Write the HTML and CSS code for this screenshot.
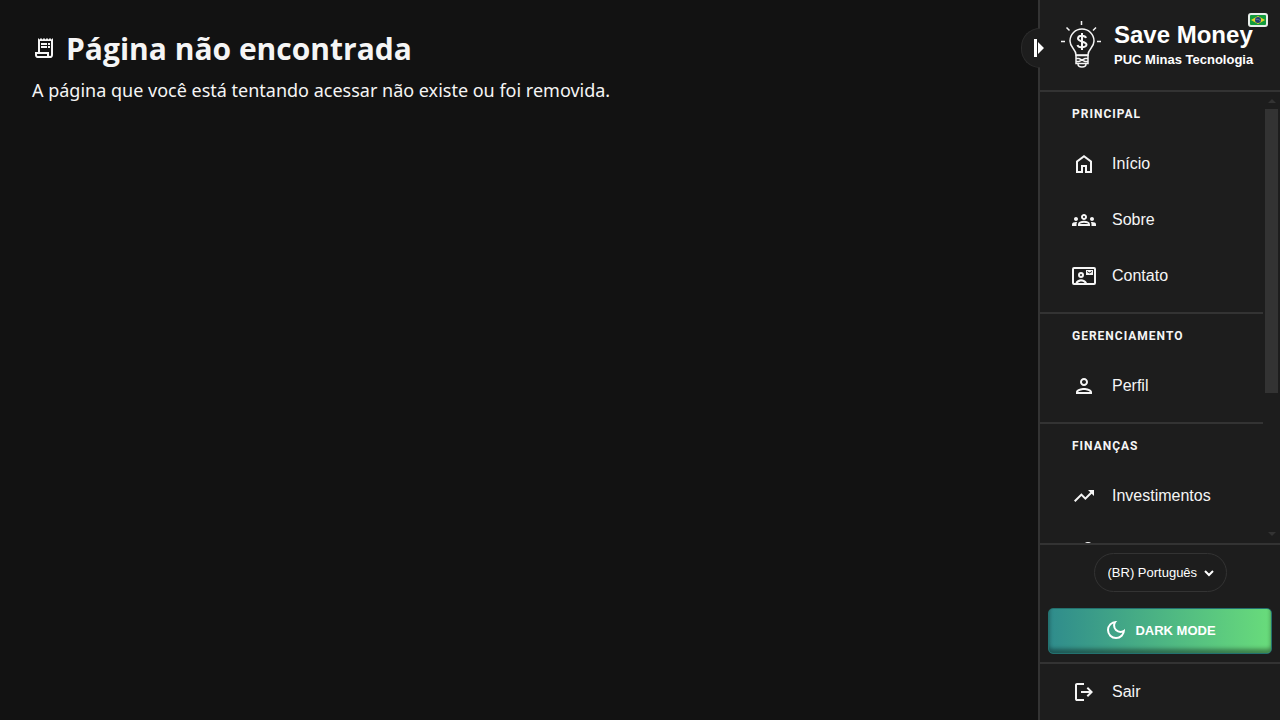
FILE: index.html
```html
<!DOCTYPE html>
<html lang="pt-BR">
<head>
<meta charset="utf-8">
<meta name="viewport" content="width=device-width, initial-scale=1">
<title>Save Money</title>
<link rel="stylesheet" href="styles.css">
</head>
<body>
<div class="layout">
  <main class="content">
    <div class="page-title">
      <svg class="icon" viewBox="0 0 24 24" aria-hidden="true"><path fill-rule="evenodd" d="M6 22q-1.250 0-2.125-.875T3 19v-3h3V2l1.500 1.500L9 2l1.500 1.500L12 2l1.500 1.500L15 2l1.500 1.500L18 2l1.500 1.500L21 2v17q0 1.250-.875 2.125T18 22zM18 20q.425 0 .713-.288T19 19V5H8v11h9v3q0 .425.288.713T18 20zM5 18v1q0 .425.288.713T6 20h9v-2zM9 7h6v2H9zM9 10h6v2H9zM16 7h2v2h-2zM16 10h2v2h-2z"/></svg>
      <h1>Página não encontrada</h1>
    </div>
    <p class="lead">A página que você está tentando acessar não existe ou foi removida.</p>
  </main>

  <aside class="sidebar">
    <button class="collapse" type="button" aria-expanded="true">
      <svg viewBox="0 0 12 20" aria-hidden="true"><path d="M1 1h3v18H1zM5 4l6 6-6 6z"/></svg>
    </button>

    <header class="brand">
      <svg class="logo" viewBox="0 0 40 48" aria-hidden="true">
        <path d="M20.500 0v4M5.500 6.500l3 3M35 6.500l-3 3M0 20.500h4M36 20.500h4"/>
        <path d="M15 34c0-6-6-7-6-14a12 12 0 0 1 24 0c0 7-6 8-6 14z"/>
        <path d="M15 34.500h12v8H15zM15 37.500h3l6 3h3M15 40.500h3l6-3h3M17 43c0 4 8 4 8 0"/>
        <path class="logo-dollar" d="M25 17c-1-3-8-3-8 .5s8.500 3 8.500 6-8 4-9 .5M21 12v17"/>
      </svg>
      <div class="brand-text">
        <span class="brand-name">Save Money</span>
        <span class="brand-sub">PUC Minas Tecnologia</span>
      </div>
      <svg class="flag" viewBox="0 0 20 14" aria-hidden="true">
        <rect x="1" y="1" width="18" height="12" rx="2" fill="#129b3c" stroke="#e8eeea" stroke-width="2"/>
        <path d="M10 3l7 4-7 4-7-4z" fill="#e9d32a"/><circle cx="10" cy="7" r="3" fill="#203f79"/><path d="M7.500 6.300q3-.5 5 1.500" fill="none" stroke="#5f7f99"/>
      </svg>
    </header>

    <div class="nav-wrap">
      <nav class="nav">
        <section class="group">
          <h2>PRINCIPAL</h2>
          <a class="item" href="#"><svg class="icon" viewBox="0 0 24 24" aria-hidden="true"><path d="M6 19h3v-6h6v6h3v-9l-6-4.500L6 10zM4 21V9l8-6 8 6v12h-7v-6h-2v6z"/></svg>Início</a>
          <a class="item" href="#"><svg class="icon" viewBox="0 0 24 24" aria-hidden="true"><path d="M4 13c1.100 0 2-.9 2-2s-.9-2-2-2-2 .9-2 2 .9 2 2 2zm1.130 1.100C4.760 14.040 4.390 14 4 14c-.99 0-1.930.21-2.780.58A2.010 2.010 0 0 0 0 16.430V18h4.500v-1.610c0-.83.23-1.610.63-2.290zM20 13c1.100 0 2-.9 2-2s-.9-2-2-2-2 .9-2 2 .9 2 2 2zm4 3.430c0-.81-.48-1.530-1.220-1.850A6.950 6.950 0 0 0 20 14c-.39 0-.76.04-1.130.1.4.68.63 1.460.63 2.290V18H24zM16.240 13.650c-1.170-.52-2.610-.9-4.240-.9s-3.070.39-4.240.9A2.988 2.988 0 0 0 6 16.390V18h12v-1.610c0-1.180-.68-2.260-1.760-2.740zM8.070 16c.09-.23.13-.39.91-.69.97-.38 1.990-.56 3.020-.56s2.050.18 3.020.56c.77.3.81.46.91.69zM12 8c.55 0 1 .45 1 1s-.45 1-1 1-1-.45-1-1 .45-1 1-1m0-2c-1.660 0-3 1.340-3 3s1.340 3 3 3 3-1.340 3-3-1.340-3-3-3z"/></svg>Sobre</a>
          <a class="item" href="#"><svg class="icon" viewBox="0 0 24 24" aria-hidden="true"><path fill-rule="evenodd" d="M2 3h20q2 0 2 2v14q0 2-2 2H2q-2 0-2-2V5q0-2 2-2zM2 5v14h1.500C5 14 13 14 15 19h7V5zM6 19h6.500C11 17 7.500 17 6 19zM9 8a3 3 0 1 1 0 6 3 3 0 0 1 0-6zM9 10a1 1 0 1 0 0 2 1 1 0 0 0 0-2zM14 6h7v5h-7zM15 7v1l2.500 1.500L20 8V7l-2.500 1.500z"/></svg>Contato</a>
        </section>
        <section class="group">
          <h2>GERENCIAMENTO</h2>
          <a class="item" href="#"><svg class="icon" viewBox="0 0 24 24" aria-hidden="true"><path d="M12 6c1.100 0 2 .9 2 2s-.9 2-2 2-2-.9-2-2 .9-2 2-2m0 10c2.700 0 5.800 1.290 6 2H6c.23-.72 3.310-2 6-2m0-12C9.790 4 8 5.790 8 8s1.790 4 4 4 4-1.790 4-4-1.790-4-4-4zm0 10c-2.670 0-8 1.340-8 4v2h16v-2c0-2.660-5.330-4-8-4z"/></svg>Perfil</a>
        </section>
        <section class="group">
          <h2>FINANÇAS</h2>
          <a class="item" href="#"><svg class="icon" viewBox="0 0 24 24" aria-hidden="true"><path d="M16 6l2.290 2.290-4.880 4.880-4-4L2 16.590 3.410 18l6-6 4 4 6.300-6.290L22 12V6z"/></svg>Investimentos</a>
          <a class="item" href="#"><svg class="icon" viewBox="0 0 24 24" aria-hidden="true"><path fill-rule="evenodd" d="M16 2a4 4 0 0 1 0 8 4 4 0 0 1 0-8zM16 4a2 2 0 1 0 0 4 2 2 0 0 0 0-4zM2 12h6l8 3v2h5v3l-8 2-6-2H2z"/></svg></a>
        </section>
      </nav>
      <div class="scrollbar" aria-hidden="true">
        <span class="arrow arrow-up"></span>
        <span class="track"><span class="thumb"></span></span>
        <span class="arrow arrow-down"></span>
      </div>
    </div>

    <div class="settings">
      <div class="language">
        <select aria-label="Idioma"><option>(BR) Português</option></select>
        <svg viewBox="0 0 10 8" aria-hidden="true"><path d="M1 2l4 4 4-4"/></svg>
      </div>
      <button class="theme" type="button"><svg class="icon" viewBox="0 0 24 24" aria-hidden="true"><path d="M12 21q-3.750 0-6.375-2.625T3 12q0-3.750 2.625-6.375T12 3q.35 0 .688.025t.662.075q-1.025.725-1.638 1.888T11.100 7.500q0 2.250 1.575 3.825T16.500 12.900q1.375 0 2.525-.613T20.900 10.650q.05.325.075.663T21 12q0 3.750-2.625 6.375T12 21zm0-2q2.200 0 3.950-1.213t2.550-3.162q-.5.125-1 .2t-1 .075q-3.075 0-5.238-2.163T9.100 7.500q0-.5.075-1t.2-1q-1.950.8-3.163 2.550T5 12q0 2.900 2.050 4.950T12 19z"/></svg>DARK MODE</button>
    </div>

    <a class="item" href="#"><svg class="icon" viewBox="0 0 24 24" aria-hidden="true"><path d="M5 21q-.825 0-1.412-.587T3 19V5q0-.825.587-1.412T5 3h7v2H5v14h7v2zM16 17l-1.375-1.450L17.175 13H9v-2h8.175l-2.550-2.550L16 7l5 5z"/></svg>Sair</a>
  </aside>
</div>
</body>
</html>
```
FILE: styles.css
```css
* {
  box-sizing: border-box;
}

body {
  margin: 0;
  background: #121212;
  color: #f5f5f5;
  font-family: "Liberation Sans", Arial, sans-serif;
  font-size: 16px;
}

.layout {
  display: flex;
  height: 100vh;
}

.content {
  flex: 1;
  padding: 27px 32px;
  font-family: "Noto Sans", "Open Sans", sans-serif;
}

.page-title {
  display: flex;
  align-items: center;
  gap: 10px;
}

h1 {
  margin: 0;
  font-family: "Open Sans", "Noto Sans", sans-serif;
  font-size: 30px;
  line-height: 44px;
}

.page-title .icon {
  margin-bottom: 2px;
}

.lead {
  margin: 5px 0 0;
  font-size: 18px;
  line-height: 28px;
}

.icon {
  flex: none;
  width: 24px;
  height: 24px;
  fill: currentColor;
}

.sidebar {
  position: relative;
  display: flex;
  flex-direction: column;
  flex: none;
  width: 242px;
  background: #1d1d1d;
  border-left: 2px solid #333;
}

.collapse {
  position: absolute;
  top: 28px;
  left: -19px;
  width: 19px;
  height: 40px;
  padding: 0;
  background: #1d1d1d;
  border: 1px solid #2c2c2c;
  border-right: 0;
  border-radius: 20px 0 0 20px;
}

.collapse svg {
  position: absolute;
  top: 9px;
  left: 11px;
  width: 12px;
  height: 20px;
  fill: #fff;
}

.brand {
  position: relative;
  display: flex;
  align-items: center;
  gap: 13px;
  height: 92px;
  padding-left: 21px;
  border-bottom: 2px solid #333;
}

.logo {
  width: 40px;
  height: 48px;
  fill: none;
  stroke: #f5f5f5;
  stroke-width: 1.5;
}

.logo-dollar {
  stroke-width: 2;
}

.brand-text {
  display: flex;
  flex-direction: column;
  color: #fff;
  font-weight: bold;
  white-space: nowrap;
}

.brand-name {
  font-size: 24px;
  line-height: 30px;
}

.brand-sub {
  font-size: 13px;
  line-height: 20px;
}

.flag {
  position: absolute;
  top: 13px;
  right: 12px;
  width: 20px;
  height: 14px;
}

.nav-wrap {
  display: flex;
  flex: 1;
  min-height: 0;
}

.nav {
  flex: 1;
  overflow: hidden;
}

.group {
  padding: 12px 0 8px;
  border-bottom: 2px solid #333;
}

h2 {
  margin: 0 0 12px;
  padding-left: 32px;
  font-family: Roboto, sans-serif;
  font-size: 12px;
  line-height: 20px;
  letter-spacing: 1px;
}

.item {
  display: flex;
  flex: none;
  align-items: center;
  gap: 16px;
  height: 56px;
  padding-left: 32px;
  color: #f5f5f5;
  text-decoration: none;
}

.scrollbar {
  display: flex;
  flex-direction: column;
  align-items: center;
  width: 17px;
  padding: 7px 0;
}

.track {
  flex: 1;
  width: 13px;
  padding: 6px 0;
}

.thumb {
  display: block;
  height: 68%;
  background: #333;
}

.arrow {
  border: 4px solid transparent;
}

.arrow-up {
  border-top: 0;
  border-bottom-color: #333;
}

.arrow-down {
  border-bottom: 0;
  border-top-color: #333;
}

.settings {
  display: flex;
  flex-direction: column;
  align-items: center;
  gap: 16px;
  padding: 8px;
  border: solid #333;
  border-width: 2px 0;
}

.language {
  display: grid;
  align-items: center;
}

.language select {
  grid-area: 1 / 1;
  width: 133px;
  height: 39px;
  padding: 0 13px;
  appearance: none;
  background: transparent;
  border: 1px solid #333;
  border-radius: 20px;
  color: #fff;
  font: 13px "Liberation Sans", Arial, sans-serif;
}

.language svg {
  grid-area: 1 / 1;
  justify-self: end;
  width: 10px;
  height: 8px;
  margin-right: 13px;
  fill: none;
  stroke: #fff;
  stroke-width: 2;
  pointer-events: none;
}

.theme {
  display: flex;
  align-items: center;
  justify-content: center;
  gap: 7px;
  width: 100%;
  height: 46px;
  padding: 0 0 2px;
  background: linear-gradient(90deg, #2f8c8c, #69dc7b);
  border: 1px solid #23716f;
  border-radius: 5px;
  box-shadow: inset 0 -4px 4px rgba(0, 0, 0, 0.4);
  color: #fff;
  font: bold 13px "Liberation Sans", Arial, sans-serif;
}
```
